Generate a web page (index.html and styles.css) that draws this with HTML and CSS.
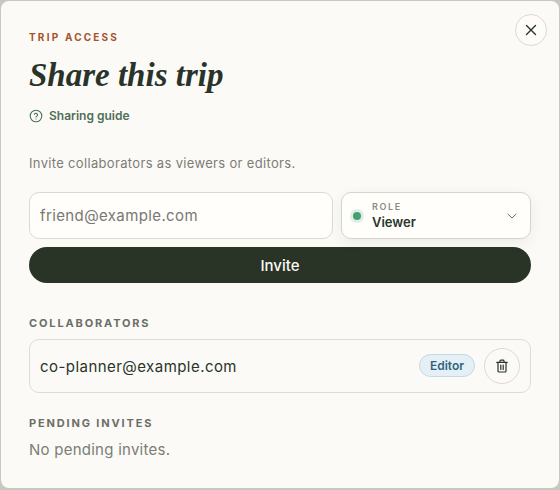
FILE: index.html
```html
<!DOCTYPE html>
<html lang="en">
<head>
<meta charset="utf-8">
<title>Share this trip</title>
<link rel="stylesheet" href="styles.css">
</head>
<body>
<main class="modal">
  <button class="close" aria-label="Close">
    <svg width="14" height="14" viewBox="0 0 14 14" fill="none" stroke="#29332a" stroke-width="1.4" stroke-linecap="round"><path d="M2.5 2.5l9 9M11.5 2.5l-9 9"/></svg>
  </button>
  <p class="eyebrow">TRIP ACCESS</p>
  <h1 class="title">Share this trip</h1>
  <a class="guide">
    <svg width="14" height="14" viewBox="0 0 14 14" fill="none" stroke="#4f6f56" stroke-width="1.1" stroke-linecap="round" stroke-linejoin="round"><circle cx="7" cy="7" r="5.8"/><path d="M5.4 5.4a1.65 1.65 0 0 1 3.2.5c0 1.1-1.6 1.4-1.6 2.2"/><path d="M7 10h.01"/></svg>
    <span>Sharing guide</span>
  </a>
  <p class="desc">Invite collaborators as viewers or editors.</p>
  <div class="form-row">
    <div class="input">friend@example.com</div>
    <div class="select">
      <span class="dot"></span>
      <span class="select-text"><span class="select-label">ROLE</span><span class="select-value">Viewer</span></span>
      <svg class="chev" width="12" height="12" viewBox="0 0 12 12" fill="none" stroke="#6b6e66" stroke-width="1" stroke-linecap="round" stroke-linejoin="round"><path d="M2 4.2l4 3.8 4-3.8"/></svg>
    </div>
  </div>
  <button class="invite">Invite</button>
  <h2 class="section first">COLLABORATORS</h2>
  <div class="person">
    <span class="email">co-planner@example.com</span>
    <span class="badge">Editor</span>
    <button class="trash" aria-label="Remove">
      <svg width="14" height="14" viewBox="0 0 14 14" fill="none" stroke="#29332a" stroke-width="1.2" stroke-linecap="round" stroke-linejoin="round"><path d="M1.8 3.4h10.4M5 3.4V2a.8.8 0 0 1 .8-.8h2.4A.8.8 0 0 1 9 2v1.4M3 3.4v8.6a1 1 0 0 0 1 1h6a1 1 0 0 0 1-1V3.4M5.8 6v4.5M8.2 6v4.5"/></svg>
    </button>
  </div>
  <h2 class="section second">PENDING INVITES</h2>
  <p class="none">No pending invites.</p>
</main>
</body>
</html>
```
FILE: styles.css
```css
* { box-sizing: border-box; }
html, body { margin: 0; height: 100%; }
body {
  background: #c9c8c0;
  font-family: "Inter", "Liberation Sans", sans-serif;
  padding: 1px 1px 2px 1px;
  height: 490px;
  overflow: hidden;
}
.modal {
  position: relative;
  height: 487px;
  background: #fbfaf6;
  border-radius: 8px;
  padding: 28px 28px 0;
}
p, h1, h2 { margin: 0; }
.close {
  position: absolute;
  top: 13px;
  right: 12px;
  width: 32px;
  height: 32px;
  border-radius: 50%;
  border: 1px solid #dcdad0;
  background: #fdfcf8;
  display: flex;
  align-items: center;
  justify-content: center;
  padding: 0;
}
.eyebrow {
  font-size: 10px;
  line-height: 16px;
  font-weight: 700;
  letter-spacing: 2.2px;
  color: #a5522f;
}
.title {
  margin-top: 10px;
  font-family: "Liberation Serif", serif;
  font-style: italic;
  font-weight: 700;
  font-size: 33px;
  line-height: 40px;
  color: #29332a;
}
.guide {
  margin-top: 13px;
  display: flex;
  align-items: center;
  gap: 6px;
  font-size: 12px;
  line-height: 16px;
  font-weight: 600;
  color: #4f6f56;
}
.desc {
  margin-top: 30px;
  font-size: 13px;
  line-height: 18px;
  letter-spacing: 0.33px;
  color: #7b7d76;
}
.form-row {
  margin-top: 20px;
  display: flex;
  gap: 8px;
}
.input {
  flex: 0 0 304px;
  height: 47px;
  border: 1px solid #dcdad0;
  border-radius: 10px;
  background: #fffefa;
  padding: 0 10px;
  display: flex;
  align-items: center;
  font-size: 15px;
  letter-spacing: 0.38px;
  color: #777871;
}
.select {
  flex: 0 0 190px;
  height: 47px;
  border: 1px solid #d6d4ca;
  border-radius: 10px;
  background: #fffefa;
  box-shadow: 0 4px 14px rgba(40, 50, 40, 0.07);
  display: flex;
  align-items: center;
  padding: 0 12px 0 11px;
}
.dot {
  width: 8px;
  height: 8px;
  border-radius: 50%;
  background: #45a06f;
  box-shadow: 0 0 0 3px #dfeee4;
}
.select-text {
  display: flex;
  flex-direction: column;
  margin-left: 11px;
  flex: 1;
}
.select-label {
  font-size: 9px;
  line-height: 12px;
  font-weight: 600;
  letter-spacing: 1.6px;
  color: #8a8b84;
}
.select-value {
  font-size: 13px;
  line-height: 18px;
  font-weight: 600;
  color: #29332a;
}
.invite {
  margin-top: 8px;
  display: block;
  width: 100%;
  height: 36px;
  border: 0;
  border-radius: 18px;
  background: #293326;
  color: #fbfaf6;
  font: 500 15px "Inter", "Liberation Sans", sans-serif;
}
.section {
  font-size: 11px;
  line-height: 14px;
  font-weight: 700;
  letter-spacing: 1.85px;
  color: #6b6e66;
}
.section.first { margin-top: 33px; }
.section.second { margin-top: 23px; }
.person {
  margin-top: 9px;
  height: 54px;
  border: 1px solid #dfddd3;
  border-radius: 10px;
  display: flex;
  align-items: center;
  padding: 0 10px;
}
.email {
  flex: 1;
  font-size: 15px;
  letter-spacing: 0.45px;
  color: #29332a;
}
.badge {
  height: 23px;
  margin-top: -2px;
  padding: 0 10px;
  display: flex;
  align-items: center;
  border: 1px solid #c3d9e6;
  border-radius: 12px;
  background: #e4f0f6;
  color: #2e6480;
  font-size: 12px;
  font-weight: 600;
}
.trash {
  margin-left: 9px;
  width: 36px;
  height: 36px;
  border-radius: 50%;
  border: 1px solid #dcdad0;
  background: #fbfaf6;
  padding: 0;
  display: flex;
  align-items: center;
  justify-content: center;
}
.none {
  margin-top: 10px;
  font-size: 15px;
  line-height: 20px;
  letter-spacing: 0.25px;
  color: #7b7d76;
}
```
